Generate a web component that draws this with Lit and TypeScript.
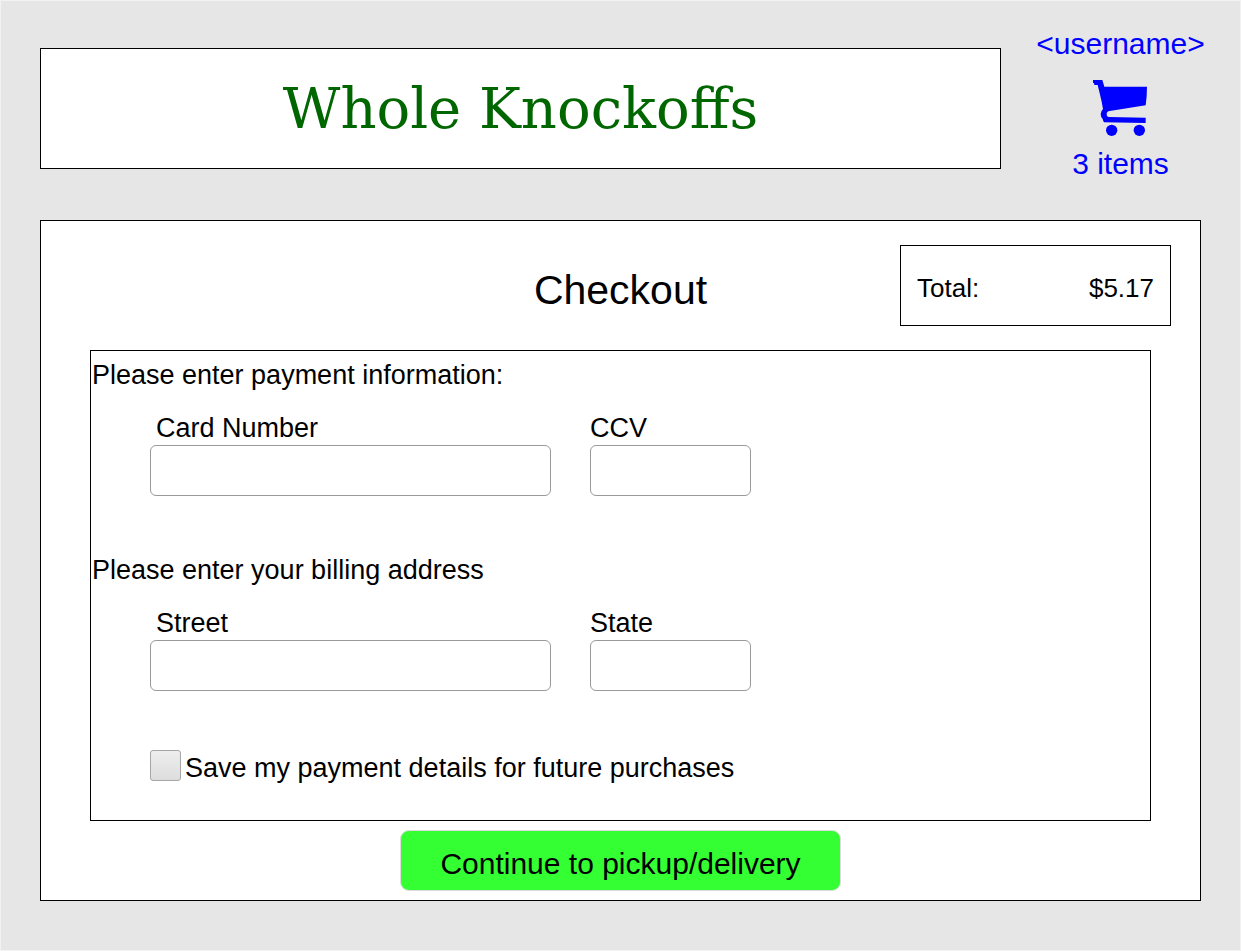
import { LitElement, html, css } from "lit";
import { customElement, property } from "lit/decorators.js";

@customElement("cart-icon")
class CartIcon extends LitElement {
  static styles = css`
    :host {
      display: block;
    }
    .icon {
      display: block;
      width: 54px;
      height: 56px;
      fill: #0000ff;
    }
  `;

  render() {
    return html`
      <svg class="icon" viewBox="0 0 162 168" aria-hidden="true">
        <path
          d="M0 0H28L34 20H162L161 48L158 76L50 93Q41 94 41 102Q41 111 48 111L158 113V129L33 127Q30 123 29 117Q23 111 23 102Q24 93 30 87L26 65L19 35L14 15H4L3 9H0Z"
        />
        <circle cx="56" cy="151" r="17" />
        <circle cx="139" cy="151" r="17" />
      </svg>
    `;
  }
}

@customElement("app-root")
class AppRoot extends LitElement {
  static styles = css`
    :host {
      display: block;
      box-sizing: border-box;
      min-height: 100vh;
      border: 1px solid #f2f2f2;
      padding-bottom: 49px;
      background: #e6e6e6;
      color: #000;
      font-family: "Liberation Sans", Arial, sans-serif;
      font-size: 27px;
      line-height: 30px;
    }
    * {
      box-sizing: border-box;
    }
    h1,
    h2,
    h3,
    p {
      margin: 0;
      font-weight: normal;
    }
    .header {
      display: grid;
      grid-template-columns: minmax(0, 1fr) 239px;
      align-items: start;
      padding-left: 39px;
    }
    .banner {
      display: flex;
      align-items: center;
      justify-content: center;
      min-height: 121px;
      margin-top: 47px;
      border: 1px solid #000;
      background: #fff;
    }
    .brand {
      color: #006600;
      font-family: "DejaVu Serif", serif;
      font-size: 56px;
      line-height: 64px;
    }
    .account {
      display: flex;
      flex-direction: column;
      align-items: center;
      gap: 19px;
      padding: 26px 0 39px;
      font-size: 30px;
      line-height: 34px;
    }
    .account a {
      color: #0000ff;
      text-decoration: none;
    }
    .cart {
      display: flex;
      flex-direction: column;
      align-items: center;
      gap: 11px;
    }
    .panel {
      margin: 0 39px;
      border: 1px solid #000;
      padding-bottom: 9px;
      background: #fff;
    }
    .summary {
      display: grid;
      grid-template-columns: 1fr auto 1fr;
      align-items: center;
      padding: 24px 29px;
    }
    .title {
      grid-column: 2;
      padding-top: 8px;
      font-size: 41px;
      line-height: 48px;
    }
    .total {
      display: flex;
      align-items: center;
      justify-content: space-between;
      justify-self: end;
      width: 271px;
      min-height: 81px;
      border: 1px solid #000;
      padding: 4px 16px 0;
      font-size: 26px;
    }
    .details {
      margin: 0 49px 9px;
      border: 1px solid #000;
      padding: 9px 0 37px;
    }
    .group {
      margin-bottom: 59px;
    }
    .heading {
      margin-bottom: 23px;
      padding-left: 1px;
      font-size: 27px;
    }
    .fields {
      display: grid;
      grid-template-columns: minmax(0, 401px) 161px;
      gap: 39px;
      padding: 0 59px;
    }
    .field {
      display: flex;
      flex-direction: column;
      gap: 2px;
    }
    .wide label {
      padding-left: 6px;
    }
    .field input {
      width: 100%;
      height: 51px;
      margin: 0;
      border: 1px solid #999;
      border-radius: 6px;
      padding: 0 12px;
      background: #fff;
      font: inherit;
    }
    .save {
      display: flex;
      align-items: flex-start;
      gap: 4px;
      padding: 0 59px;
    }
    .save input {
      appearance: none;
      flex: none;
      width: 31px;
      height: 31px;
      margin: 0;
      border: 1px solid #a6a6a6;
      border-radius: 3px;
      background: linear-gradient(#eee, #ddd);
    }
    .save input:checked {
      background: #33ff33;
    }
    .save label {
      padding-top: 3px;
    }
    .continue {
      display: block;
      width: 441px;
      max-width: 100%;
      min-height: 61px;
      margin: 0 auto;
      border: 1px solid #ddd;
      border-radius: 9px;
      padding: 6px 16px 0;
      background: #33ff33;
      color: #000;
      font: inherit;
      font-size: 30px;
      line-height: 34px;
      cursor: pointer;
    }
  `;

  @property() user = "<username>";
  @property({ type: Number }) items = 3;
  @property({ type: Number }) total = 5.17;

  private field(id: string, label: string, wide = false) {
    return html`
      <div class="field ${wide ? "wide" : ""}">
        <label for=${id}>${label}</label>
        <input id=${id} type="text" />
      </div>
    `;
  }

  render() {
    return html`
      <header class="header">
        <div class="banner"><h1 class="brand">Whole Knockoffs</h1></div>
        <nav class="account">
          <a href="#account">${this.user}</a>
          <a class="cart" href="#cart">
            <cart-icon></cart-icon>
            <span>${this.items} items</span>
          </a>
        </nav>
      </header>
      <main class="panel">
        <div class="summary">
          <h2 class="title">Checkout</h2>
          <p class="total">
            <span>Total:</span><span>$${this.total.toFixed(2)}</span>
          </p>
        </div>
        <div class="details">
          <section class="group">
            <h3 class="heading">Please enter payment information:</h3>
            <div class="fields">
              ${this.field("card", "Card Number", true)}
              ${this.field("ccv", "CCV")}
            </div>
          </section>
          <section class="group">
            <h3 class="heading">Please enter your billing address</h3>
            <div class="fields">
              ${this.field("street", "Street", true)}
              ${this.field("state", "State")}
            </div>
          </section>
          <div class="save">
            <input id="save" type="checkbox" />
            <label for="save">Save my payment details for future purchases</label>
          </div>
        </div>
        <button class="continue" type="button">Continue to pickup/delivery</button>
      </main>
    `;
  }
}
